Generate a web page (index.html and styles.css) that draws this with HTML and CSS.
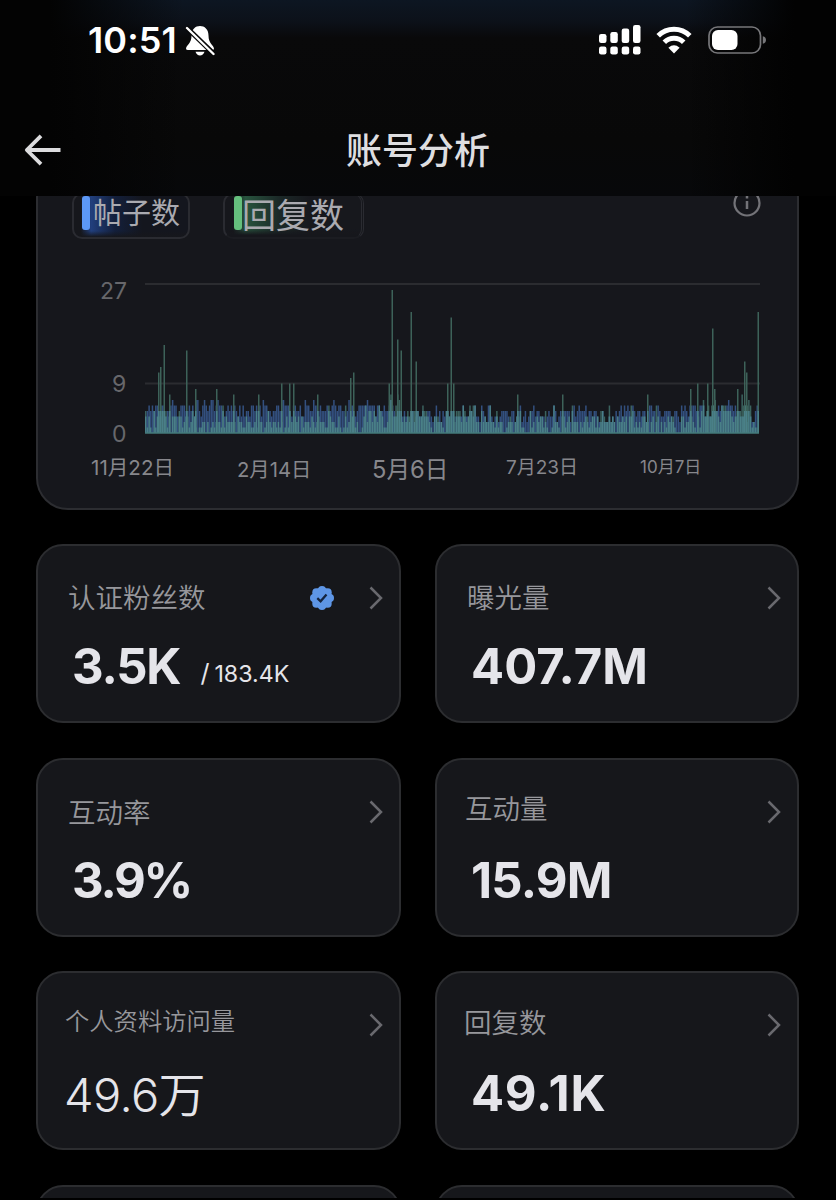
FILE: index.html
```html
<!DOCTYPE html>
<html lang="zh-CN">
<head>
<meta charset="utf-8">
<title>账号分析</title>
<link rel="stylesheet" href="styles.css">
</head>
<body>
<div class="screen">
  <header class="top">
    <div class="status">
      <span class="time">10:51</span>
      <svg class="bell" width="30" height="32" viewBox="0 0 30 32"><path d="M15 1C10.500 1 6.500 4.200 6.500 10.500C6.500 18.500 1.500 20 1 23.500Q1 25 3 25H27Q29 25 29 23.500C28.500 20 23.500 18.500 23.500 10.500C23.500 4.200 19.500 1 15 1ZM10.500 26.800H19.500C18.800 29 17 30.500 15 30.500S11.200 29 10.500 26.800Z" fill="#fff"/><path d="M1 2L28.500 28.500" stroke="#080809" stroke-width="5"/><path d="M2 3L28.500 29" stroke="#fff" stroke-width="2.400" stroke-linecap="round"/></svg>
      <svg class="signal" width="42" height="30" viewBox="0 0 42 30" fill="#fff"><rect y="9" width="7.500" height="9" rx="2.200"/><rect x="11.300" y="7" width="7.500" height="11" rx="2.200"/><rect x="22.700" y="3.500" width="7.500" height="14.500" rx="2.200"/><rect x="34" width="7.500" height="18" rx="2.200"/><rect y="21.500" width="7.500" height="8" rx="2.200"/><rect x="11.300" y="21.500" width="7.500" height="8" rx="2.200"/><rect x="22.700" y="21.500" width="7.500" height="8" rx="2.200"/><rect x="34" y="21.500" width="7.500" height="8" rx="2.200"/></svg>
      <svg class="wifi" width="36" height="28" viewBox="0 0 36 28"><g fill="none" stroke="#fff" stroke-width="5"><path d="M2.200 9.800A22.400 22.400 0 0 1 33.800 9.800"/><path d="M8.300 16.200A13.800 13.800 0 0 1 27.700 16.200"/></g><path d="M18 27.500L12.400 21.700Q18 17 23.600 21.700Z" fill="#fff"/></svg>
      <svg class="battery" width="58" height="28" viewBox="0 0 58 28"><rect x="1" y="1" width="51.500" height="26" rx="8.500" fill="none" stroke="#77777a" stroke-width="1.700"/><rect x="4" y="4" width="25.500" height="20" rx="6" fill="#fff"/><path d="M54.800 10.200Q58 11 58 14T54.800 17.800Z" fill="#77777a"/></svg>
    </div>
    <div class="nav">
      <svg class="back" width="38" height="32" viewBox="0 0 38 32" fill="none" stroke="#dcdcde" stroke-width="3.800"><path d="M36.500 16H3M17 1.800L2.800 16L17 30.200" stroke-linejoin="round"/></svg>
      <h1 class="title">账号分析</h1>
    </div>
  </header>
  <main class="content">
    <section class="chart-card">
      <div class="tabs">
        <div class="tab posts"><i class="swatch"></i><span>帖子数</span></div>
        <div class="tab replies"><i class="swatch"></i><span>回复数</span></div>
        <svg class="info" width="28" height="28" viewBox="0 0 28 28"><circle cx="14" cy="14" r="12.500" fill="none" stroke="#737378" stroke-width="2.200"/><path d="M14 12V20M14 6.800V9.600" stroke="#737378" stroke-width="2.500"/></svg>
      </div>
      <div class="plot">
        <div class="scale"><span class="s27">27</span><span class="s9">9</span><span class="s0">0</span></div>
        <svg id="chart" width="616" height="154" viewBox="0 0 616 154"></svg>
      </div>
      <div class="dates"><span class="d1">11月22日</span><span class="d2">2月14日</span><span class="d3">5月6日</span><span class="d4">7月23日</span><span class="d5">10月7日</span></div>
    </section>
    <section class="grid">
      <article class="card"><div class="head"><span class="label">认证粉丝数</span><svg class="badge" width="26" height="26" viewBox="0 0 26 26"><g fill="#5e96e6"><circle cx="13" cy="13" r="10.400"/><circle cx="13" cy="5" r="4"/><circle cx="18.700" cy="7.300" r="4"/><circle cx="21" cy="13" r="4"/><circle cx="18.700" cy="18.700" r="4"/><circle cx="13" cy="21" r="4"/><circle cx="7.300" cy="18.700" r="4"/><circle cx="5" cy="13" r="4"/><circle cx="7.300" cy="7.300" r="4"/></g><path d="M8.300 13.200L11.600 16.300L17.500 9.500" fill="none" stroke="#14243f" stroke-width="2.300"/></svg><svg class="chev" width="14" height="24" viewBox="0 0 14 24"><path d="M1.500 1.500L12 12L1.500 22.500"/></svg></div><div class="value"><b class="v35">3.5K</b><span class="slash">/</span><span class="total">183.4K</span></div></article>
      <article class="card right"><div class="head"><span class="label">曝光量</span><svg class="chev" width="14" height="24" viewBox="0 0 14 24"><path d="M1.500 1.500L12 12L1.500 22.500"/></svg></div><div class="value"><b class="v407">407.7M</b></div></article>
      <article class="card"><div class="head"><span class="label low">互动率</span><svg class="chev" width="14" height="24" viewBox="0 0 14 24"><path d="M1.500 1.500L12 12L1.500 22.500"/></svg></div><div class="value"><b class="v39">3.9%</b></div></article>
      <article class="card right"><div class="head"><span class="label high">互动量</span><svg class="chev" width="14" height="24" viewBox="0 0 14 24"><path d="M1.500 1.500L12 12L1.500 22.500"/></svg></div><div class="value"><b class="v159">15.9M</b></div></article>
      <article class="card"><div class="head"><span class="label visits">个人资料访问量</span><svg class="chev" width="14" height="24" viewBox="0 0 14 24"><path d="M1.500 1.500L12 12L1.500 22.500"/></svg></div><div class="value"><span class="regular">49.6万</span></div></article>
      <article class="card right"><div class="head"><span class="label reply">回复数</span><svg class="chev" width="14" height="24" viewBox="0 0 14 24"><path d="M1.500 1.500L12 12L1.500 22.500"/></svg></div><div class="value"><b class="v491">49.1K</b></div></article>
      <article class="card"></article>
      <article class="card right"></article>
    </section>
  </main>
</div>
<script src="chart.js"></script>
</body>
</html>
```
FILE: styles.css
```css
* { box-sizing: border-box; }
body { margin: 0; background: #000; color: #e5e5ea; font-family: Inter, "Noto Sans CJK SC", sans-serif; }
.screen { width: 836px; height: 1200px; overflow: hidden; display: flex; flex-direction: column; border-bottom: 2px solid #000; }
.top { height: 196px; flex: none; background: linear-gradient(90deg, #030303 0, #030303 6%, transparent 22%, transparent 82%, #020202 95%), linear-gradient(#0d1622 0, #0c1119 22px, #09090a 38px, #080808 140px, #07080a 196px); }
.status { height: 80px; display: flex; align-items: center; padding-left: 88px; }
.time { font-size: 36px; font-weight: 600; color: #fff; letter-spacing: 0.100px; width: 97px; white-space: nowrap; }
.bell { margin-top: 1px; }
.signal { margin-left: 384px; }
.wifi { margin-left: 15px; }
.battery { margin-left: 16px; }
.nav { height: 116px; display: flex; align-items: center; padding: 26px 0 0 24px; }
.back { margin-bottom: 3px; }
.title { margin: 0 0 1px 284px; font-size: 36px; font-weight: 500; line-height: 50px; color: #dedee0; white-space: nowrap; }
.content { flex: 1; overflow: hidden; }
.chart-card { width: 763px; height: 344px; margin: -30px 0 0 36px; padding: 25px 0 0 34px; border: 2px solid #2c2d31; border-radius: 32px; background: #16171c; }
.tabs { display: flex; height: 46px; }
.tab { display: flex; align-items: center; border: 2px solid #2a2b31; border-radius: 10px; color: #aaaab0; white-space: nowrap; }
.posts { width: 118px; height: 46px; padding-left: 8px; font-size: 29px; background: linear-gradient(#0000 36px, #16171c 42px), linear-gradient(90deg, #16171c 6%, #213f7d 15%, #131f3b 36%, #14161e 60%); }
.replies { width: 141px; height: 46px; margin-left: 33px; padding-left: 9px; font-size: 34px; border-bottom-color: #1b1c21; border-right-width: 3px; border-right-style: double; background: linear-gradient(#0000 34px, #16171c 40px), linear-gradient(90deg, #16171c 6%, #28543e 15%, #1b2827 40%, #17181d 62%); }
.swatch { width: 8px; height: 34px; border-radius: 3px; margin-top: -6px; background: #5c98f6; flex: none; }
.replies .swatch { background: #65bf7d; }
.tab span { margin: -5px 0 0 3px; line-height: 34px; }
.tab.replies span { margin: 0; }
.info { margin: -4px 0 0 369px; }
.plot { display: flex; height: 154px; margin-top: 44px; }
.scale { width: 73px; flex: none; display: flex; flex-direction: column; margin-top: -6px; font-size: 23px; line-height: 28px; color: #67676b; }
.s27 { margin-left: 28px; }
.s9 { margin: 65px 0 0 40px; }
.s0 { margin: 22px 0 0 40px; }
.dates { display: flex; color: #87878c; padding-left: 19px; margin-top: 16px; align-items: center; height: 30px; line-height: 30px; white-space: nowrap; }
.d1 { font-size: 20.600px; width: 146px; }
.d2 { font-size: 20.300px; width: 135px; padding-top: 3px; }
.d3 { font-size: 23.700px; width: 134px; padding-top: 4px; }
.d4 { font-size: 19px; width: 134px; }
.d5 { font-size: 17px; padding-bottom: 2px; }
.grid { display: grid; grid-template-columns: 365px 364px; grid-auto-rows: 179px; column-gap: 34px; row-gap: 34.700px; margin: 34px 0 0 36px; }
.card { border: 2px solid #2c2d30; border-radius: 27px; background: #16171b; padding: 33px 16px 0 30px; }
.head { display: flex; align-items: center; height: 38px; }
.label { font-size: 27.500px; line-height: 36px; color: #97979c; font-weight: 350; white-space: nowrap; margin-right: auto; }
.low { padding-top: 2px; }
.high { margin-bottom: 6px; margin-left: -2px; }
.visits { font-size: 24.300px; margin: 0 auto 8px -3px; }
.reply { margin: 0 auto 4px -3px; }
.badge { margin-right: 34px; }
.chev path { fill: none; stroke: #69696e; stroke-width: 2.500; }
.value { display: flex; align-items: baseline; margin-top: 20px; height: 60px; line-height: 60px; font-size: 49px; padding-left: 4px; color: #e5e5ea; white-space: nowrap; }
.value b { font-weight: 700; }
.v35 { letter-spacing: -1.200px; }
.v39 { letter-spacing: -2.200px; }
.v159 { letter-spacing: -0.800px; }
.v491 { letter-spacing: 0.700px; }
.slash { font-size: 25px; margin-left: 20px; position: relative; top: -2px; }
.total { font-size: 23.200px; margin-left: 5px; position: relative; top: -2px; }
.regular { font-size: 47px; font-weight: 350; margin-left: -8px; letter-spacing: -0.600px; padding-top: 1px; }
```
FILE: chart.js
```js
const svg = document.getElementById('chart');
const unit = 5.5;
const base = 150;
let seed = 71;
const random = () => (seed = (seed * 16807) % 2147483647) / 2147483647;
const peaks = [[13,11],[15,12],[18.5,16],[24,7],[41,15],[50,8],[71,8],[88,7],[113,7],[136,9],[144,9],[148,9],[172,7],[205,10],[208,11],[243.5,9],[246.5,26],[252,17],[255.5,15],[265.5,22],[270.5,13],[302,9],[305.5,21],[308,9],[372,7],[417,7],[502,7],[545,8],[552,9],[562,9],[567,19],[569,8],[592,8],[599,13],[601,11],[612.5,22]];
let out = '<path d="M0 1H615M0 100.500H615" stroke="#2b2c30" stroke-width="2"/>';
const bar = (x, v, color) => { out += `<rect x="${x.toFixed(2)}" y="${base - v * unit}" width="1.5" height="${v * unit}" fill="${color}"/>`; };
for (let i = 0; i < 365; i++) {
  const x = i * 1.68;
  const early = x < 250 || (x > 535 && x < 600);
  let p = Math.round((early ? 2.8 : 1.8) + random() * 2.7);
  if (random() > 0.85) p += 1;
  if (random() > 0.9) p += 1;
  let r = Math.round(random() * 3);
  if (random() > 0.78) r += 2;
  if ((x > 243 && x < 282) || (x > 300 && x < 330) || (x > 12 && x < 21) || (x > 555 && x < 605)) r += 2;
  bar(x, p, '#33507f');
  if (r > p) bar(x, r, '#3b635f');
  bar(x, Math.min(r, p), '#4a8088');
}
for (const [x, v] of peaks) {
  bar(x, v, '#3d6259');
  bar(x, 4, '#4a8088');
}
out += '<path d="M0 150H614" stroke="#447b7b" stroke-width="1.500"/>';
svg.innerHTML = out;
```
